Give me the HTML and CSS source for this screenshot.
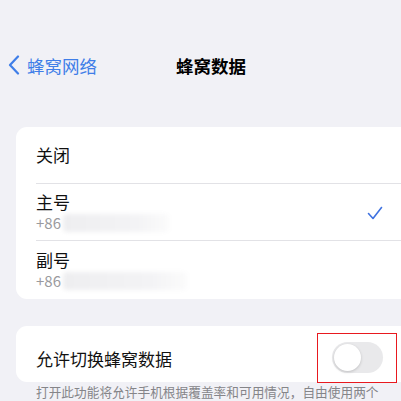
FILE: index.html
```html
<!DOCTYPE html>
<html lang="zh-CN">
  <head>
    <meta charset="UTF-8" />
    <meta name="viewport" content="width=device-width, initial-scale=1.0" />
    <title>蜂窝数据</title>
    <link rel="stylesheet" href="styles.css">
  </head>
  <body>
    <div id="screen">
      <div class="nav">
        <div class="back">
          <svg class="chev" width="12" height="20" viewBox="0 0 12 20">
            <path d="M10 1.5 L2 10 L10 18.5" fill="none" stroke="#3f7ee8" stroke-width="2.2" stroke-linecap="round" stroke-linejoin="round"/>
          </svg>
          <span>蜂窝网络</span>
        </div>
        <div class="title">蜂窝数据</div>
      </div>

      <div class="card first">
        <div class="row single">关闭</div>
        <div class="row double">
          <div class="info">
            <div class="name">主号</div>
            <div class="num">+86 <span class="blur w1"></span></div>
          </div>
          <svg class="check" width="16" height="14" viewBox="0 0 16 14">
            <path d="M1.5 7.5 L6 12.5 L14.5 1.5" fill="none" stroke="#3f72e0" stroke-width="1.6" stroke-linecap="round" stroke-linejoin="round"/>
          </svg>
        </div>
        <div class="row double last">
          <div class="info">
            <div class="name">副号</div>
            <div class="num">+86<span class="blur w2"></span></div>
          </div>
        </div>
      </div>

      <div class="card second">
        <div class="row switch-row">
          <span>允许切换蜂窝数据</span>
          <div class="toggle"><div class="knob"></div></div>
          <div class="mark"></div>
        </div>
      </div>
      <p class="note">打开此功能将允许手机根据覆盖率和可用情况，自由使用两个</p>
    </div>
  </body>
</html>
```

FILE: styles.css
```css
* {
  padding: 0;
  margin: 0;
  box-sizing: border-box;
}
body {
  background: #f1f1f6;
  font-family: "Noto Sans CJK SC", "Noto Sans", sans-serif;
  color: #111;
  overflow: hidden;
}
#screen {
  display: flex;
  flex-direction: column;
  width: 401px;
  height: 401px;
  padding-top: 48px;
}
.nav {
  position: relative;
  display: flex;
  align-items: center;
  height: 36px;
}
.back {
  display: flex;
  align-items: center;
  gap: 7px;
  padding-left: 8px;
  color: #3f7ee8;
  font-size: 17.5px;
}
.title {
  position: absolute;
  left: 176px;
  font-size: 17.5px;
  font-weight: 700;
  color: #000;
}
.card {
  background: #fff;
  margin-left: 16px;
  border-radius: 11px 0 0 11px;
}
.first {
  margin-top: 45px;
}
.row {
  display: flex;
  align-items: center;
  margin-left: 20px;
  padding-right: 20px;
  border-bottom: 1px solid #e2e2e6;
  font-size: 17px;
}
.single {
  height: 57px;
  padding-bottom: 2px;
}
.double {
  height: 57px;
  justify-content: space-between;
}
.last {
  height: 58px;
  border-bottom: none;
}
.name {
  line-height: 22px;
}
.num {
  display: flex;
  align-items: center;
  font-size: 15px;
  color: #9a9a9e;
  line-height: 20px;
}
.blur {
  display: inline-block;
  height: 18px;
  margin-left: 2px;
  border-radius: 4px;
  background: linear-gradient(90deg, #eeeef0, #f3f3f5 70%, #fbfbfb);
  filter: blur(2px);
}
.w1 {
  width: 106px;
}
.w2 {
  width: 124px;
}
.check {
  margin-right: -2px;
  margin-top: 2px;
}
.second {
  margin-top: 27px;
}
.switch-row {
  position: relative;
  height: 56px;
  padding-top: 8px;
  justify-content: space-between;
  border-bottom: none;
}
.toggle {
  width: 51px;
  height: 31px;
  margin-top: -2px;
  margin-right: -2px;
  border-radius: 16px;
  background: #e9e9eb;
  padding: 2px;
}
.knob {
  width: 27px;
  height: 27px;
  border-radius: 50%;
  background: #fff;
  box-shadow: 0 1px 3px rgba(0, 0, 0, 0.18);
}
.mark {
  position: absolute;
  left: 281px;
  top: 7px;
  width: 80px;
  height: 50px;
  border: 1px solid #e8191f;
}
.note {
  margin-top: 0;
  padding-left: 36px;
  font-size: 12.7px;
  color: #858589;
  white-space: nowrap;
}
```
